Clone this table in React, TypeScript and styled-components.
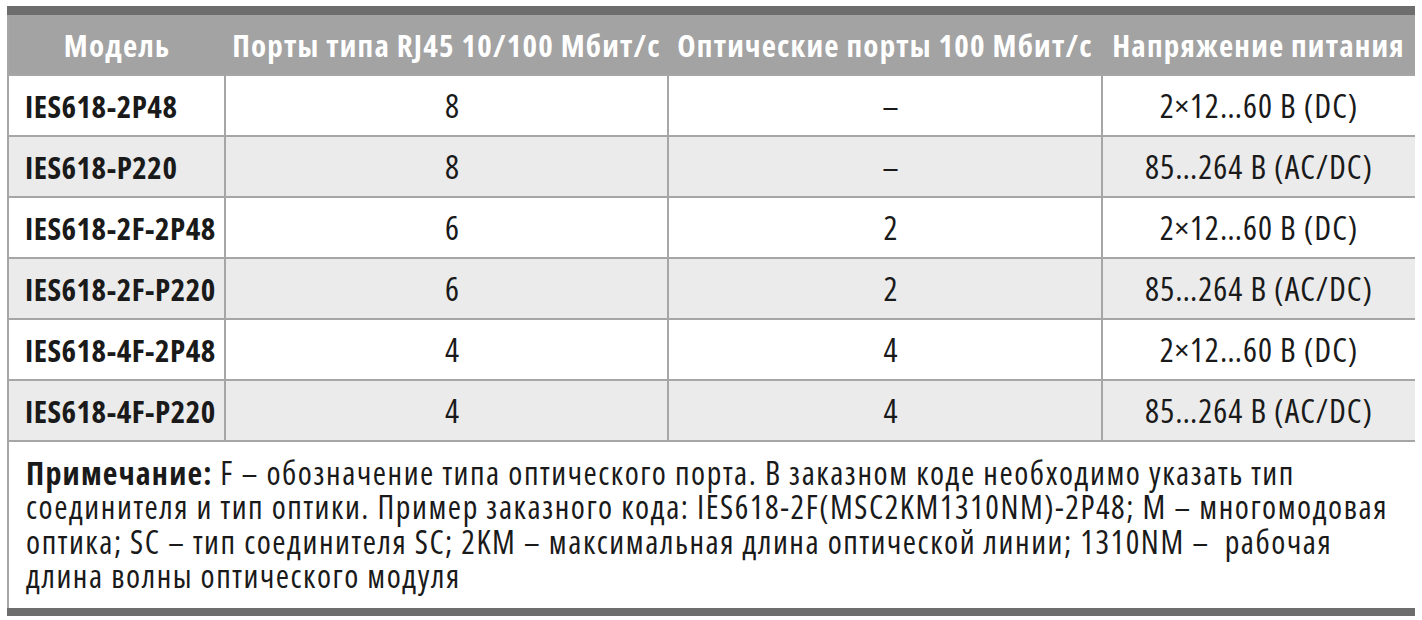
import React from 'react';
import styled, { createGlobalStyle } from 'styled-components';

const GlobalStyle = createGlobalStyle`
  body {
    margin: 0;
    background: #ffffff;
    font-family: "Open Sans", "Noto Sans", "DejaVu Sans", sans-serif;
    font-stretch: 75%;
  }
`;

const Page = styled.div`
  padding: 6px 7px 0 7px;
`;

const Frame = styled.div`
  width: 1408px;
  border-top: 9px solid #6d6d6d;
  border-bottom: 8px solid #6d6d6d;
  overflow: hidden;
`;

const Table = styled.table`
  width: 1408px;
  border-collapse: collapse;
  table-layout: fixed;
  border-left: 2px solid #a6a6a6;
  border-right: 2px solid #a6a6a6;
`;

const HeadRow = styled.tr`
  height: 60px;
  background: #a3a3a3;
`;

const Head = styled.th`
  padding: 0 2px;
  color: #ffffff;
  font-size: 31px;
  font-weight: 700;
  letter-spacing: 1.2px;
  text-align: center;
  white-space: nowrap;
`;

const Row = styled.tr<{ $shaded: boolean }>`
  height: 61px;
  background: ${(p) => (p.$shaded ? '#ebebeb' : '#ffffff')};
`;

type Kind = 'model' | 'count' | 'power';

const Cell = styled.td<{ $kind: Kind }>`
  padding: ${(p) =>
    p.$kind === 'model' ? '0 16px' : p.$kind === 'count' ? '0 6px 0 18px' : '0 8px'};
  border: 2px solid #a6a6a6;
  color: #1a1a1a;
  font-size: ${(p) => (p.$kind === 'model' ? '31px' : '33px')};
  font-weight: ${(p) => (p.$kind === 'model' ? 700 : 400)};
  letter-spacing: ${(p) => (p.$kind === 'model' ? '0.5px' : '1px')};
  text-align: ${(p) => (p.$kind === 'model' ? 'left' : 'center')};
  white-space: nowrap;
`;

const NoteRow = styled.tr`
  height: 167px;
`;

const NoteCell = styled.td`
  padding: 14px 16px 0 17px;
  vertical-align: top;
  color: #1a1a1a;
  font-size: 32px;
  line-height: 34.3px;
  letter-spacing: 1.55px;
  white-space: nowrap;
`;

const Label = styled.b`
  font-weight: 700;
  letter-spacing: 1.2px;
`;

type Model = {
  name: string;
  rj45: string;
  optical: string;
  power: string;
};

const models: Model[] = [
  { name: 'IES618-2P48', rj45: '8', optical: '–', power: '2×12…60 В (DC)' },
  { name: 'IES618-P220', rj45: '8', optical: '–', power: '85…264 В (AC/DC)' },
  { name: 'IES618-2F-2P48', rj45: '6', optical: '2', power: '2×12…60 В (DC)' },
  { name: 'IES618-2F-P220', rj45: '6', optical: '2', power: '85…264 В (AC/DC)' },
  { name: 'IES618-4F-2P48', rj45: '4', optical: '4', power: '2×12…60 В (DC)' },
  { name: 'IES618-4F-P220', rj45: '4', optical: '4', power: '85…264 В (AC/DC)' },
];

export default function App() {
  return (
    <Page>
      <GlobalStyle />
      <Frame>
        <Table>
          <colgroup>
            <col style={{ width: 217 }} />
            <col style={{ width: 443 }} />
            <col style={{ width: 434 }} />
            <col style={{ width: 314 }} />
          </colgroup>
          <thead>
            <HeadRow>
              <Head>Модель</Head>
              <Head>Порты типа RJ45 10/100 Мбит/с</Head>
              <Head>Оптические порты 100 Мбит/с</Head>
              <Head>Напряжение питания</Head>
            </HeadRow>
          </thead>
          <tbody>
            {models.map((m, i) => (
              <Row key={m.name} $shaded={i % 2 === 1}>
                <Cell $kind="model">{m.name}</Cell>
                <Cell $kind="count">{m.rj45}</Cell>
                <Cell $kind="count">{m.optical}</Cell>
                <Cell $kind="power">{m.power}</Cell>
              </Row>
            ))}
            <NoteRow>
              <NoteCell colSpan={4}>
                <Label>Примечание:</Label> F – обозначение типа оптического порта. В заказном коде необходимо указать тип
                <br />
                соединителя и тип оптики. Пример заказного кода: IES618-2F(MSC2KM1310NM)-2P48; M – многомодовая
                <br />
                оптика; SC – тип соединителя SC; 2KM – максимальная длина оптической линии; 1310NM –&nbsp; рабочая
                <br />
                длина волны оптического модуля
              </NoteCell>
            </NoteRow>
          </tbody>
        </Table>
      </Frame>
    </Page>
  );
}
